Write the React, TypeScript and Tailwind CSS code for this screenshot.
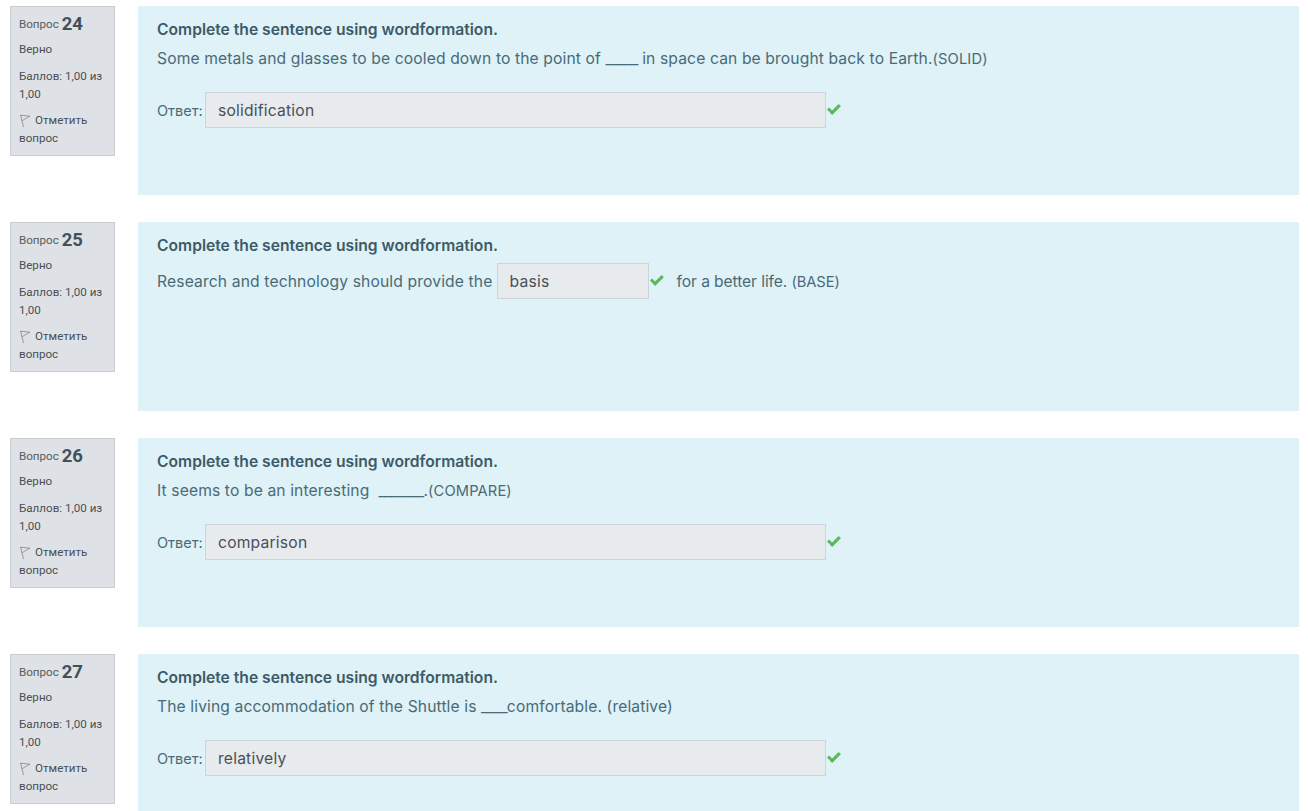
const questions = [
  { num: 24, sentence: "Some metals and glasses to be cooled down to the point of _____ in space can be brought back to Earth.", hint: "(SOLID)", answer: "solidification" },
  { num: 25, inline: true, answer: "basis" },
  { num: 26, sentence: "It seems to be an interesting  _______.", hint: "(COMPARE)", answer: "comparison" },
  { num: 27, sentence: "The living accommodation of the Shuttle is ____comfortable. (relative)", answer: "relatively" },
];

function CheckMark() {
  return (
    <svg viewBox="0 0 14 11" className="w-[14px] h-[11px] shrink-0 fill-[#5cb85c] mb-[2px]">
      <path d="M0 5.6 2.1 3.5 5.1 6.5 11.6 0 13.9 2.2 5.1 10.9Z" />
    </svg>
  );
}

function FlagIcon() {
  return (
    <svg viewBox="0 0 12 14" className="w-3 h-[14px] shrink-0 fill-none stroke-[#8a8f94]">
      <path d="M1.5 1 4.5 13M1.5 1.2 11 2.2 6.5 4.6 3 7" strokeWidth="0.9" />
    </svg>
  );
}

function Info({ num }: { num: number }) {
  return (
    <div className="w-[105px] h-[150px] shrink-0 bg-[#dee2e6] border border-[#c8cdd2] px-2 pt-[5px] font-['Roboto',sans-serif] text-[11.6px] leading-[18px] text-[#4a4f54]">
      <div className="h-[24px] flex items-center">
        <span className="text-[#555b61]">Вопрос</span>
        <span className="ml-[3px] text-[18.5px] font-bold text-[#3f5159]">{num}</span>
      </div>
      <div className="mt-[4px]">Верно</div>
      <div className="mt-[9px]">Баллов: 1,00 из 1,00</div>
      <div className="mt-[8px]">
        <span className="inline-flex align-middle mr-[4px]"><FlagIcon /></span>
        Отметить вопрос
      </div>
    </div>
  );
}

function AnswerInput({ value, className }: { value: string; className: string }) {
  return (
    <div className={`h-[36px] bg-[#e7ebee] border border-[#ced4da] pl-3 pt-[2px] flex items-center tracking-[0.2px] text-[#495057] ${className}`}>
      {value}
    </div>
  );
}

// the gaps are drawn a little tighter than the words around them
function Sentence({ text }: { text: string }) {
  return (
    <>
      {text.split(/(_+)/).map((part, i) =>
        part.startsWith("_") ? (
          <span key={i} className="tracking-[-0.7px]">{part}</span>
        ) : (
          part
        )
      )}
    </>
  );
}

export default function App() {
  return (
    <div className="h-[811px] overflow-hidden bg-white pt-[6px] pl-[10px] pr-[9px] flex flex-col gap-[27px] font-['Inter',sans-serif] text-[15.65px] text-[#4a6a76]">
      {questions.map((q) => (
        <div key={q.num} className="flex gap-[23px]">
          <Info num={q.num} />
          <div className="flex-1 h-[189px] shrink-0 bg-[#def2f8] pl-[19px] pt-[13px]">
            <div className="h-[22px] leading-[22px] font-semibold text-[#3d5a66]">Complete the sentence using wordformation.</div>
            {q.inline ? (
              <div className="mt-[6px] h-[36px] flex items-center whitespace-pre tracking-[0.14px]">
                <span className="pt-[2px]">Research and technology should provide the</span>
                <AnswerInput value="basis" className="ml-1 w-[152px]" />
                <span className="ml-[1px] flex"><CheckMark /></span>
                <span className="ml-[13px] pt-[2px] tracking-[-0.1px]">for a better life. <span className="text-[14.7px]">(BASE)</span></span>
              </div>
            ) : (
              <>
                <div className="mt-[7px] h-[22px] leading-[22px] whitespace-pre tracking-[0.12px]">
                  <Sentence text={q.sentence ?? ""} />
                  {q.hint && <span className="text-[14.7px]">{q.hint}</span>}
                </div>
                <div className="mt-[22px] flex items-center">
                  <span className="w-[48px] pt-[2px] text-[14.5px]">Ответ:</span>
                  <AnswerInput value={q.answer} className="w-[621px]" />
                  <span className="ml-[1px] flex"><CheckMark /></span>
                </div>
              </>
            )}
          </div>
        </div>
      ))}
    </div>
  );
}
